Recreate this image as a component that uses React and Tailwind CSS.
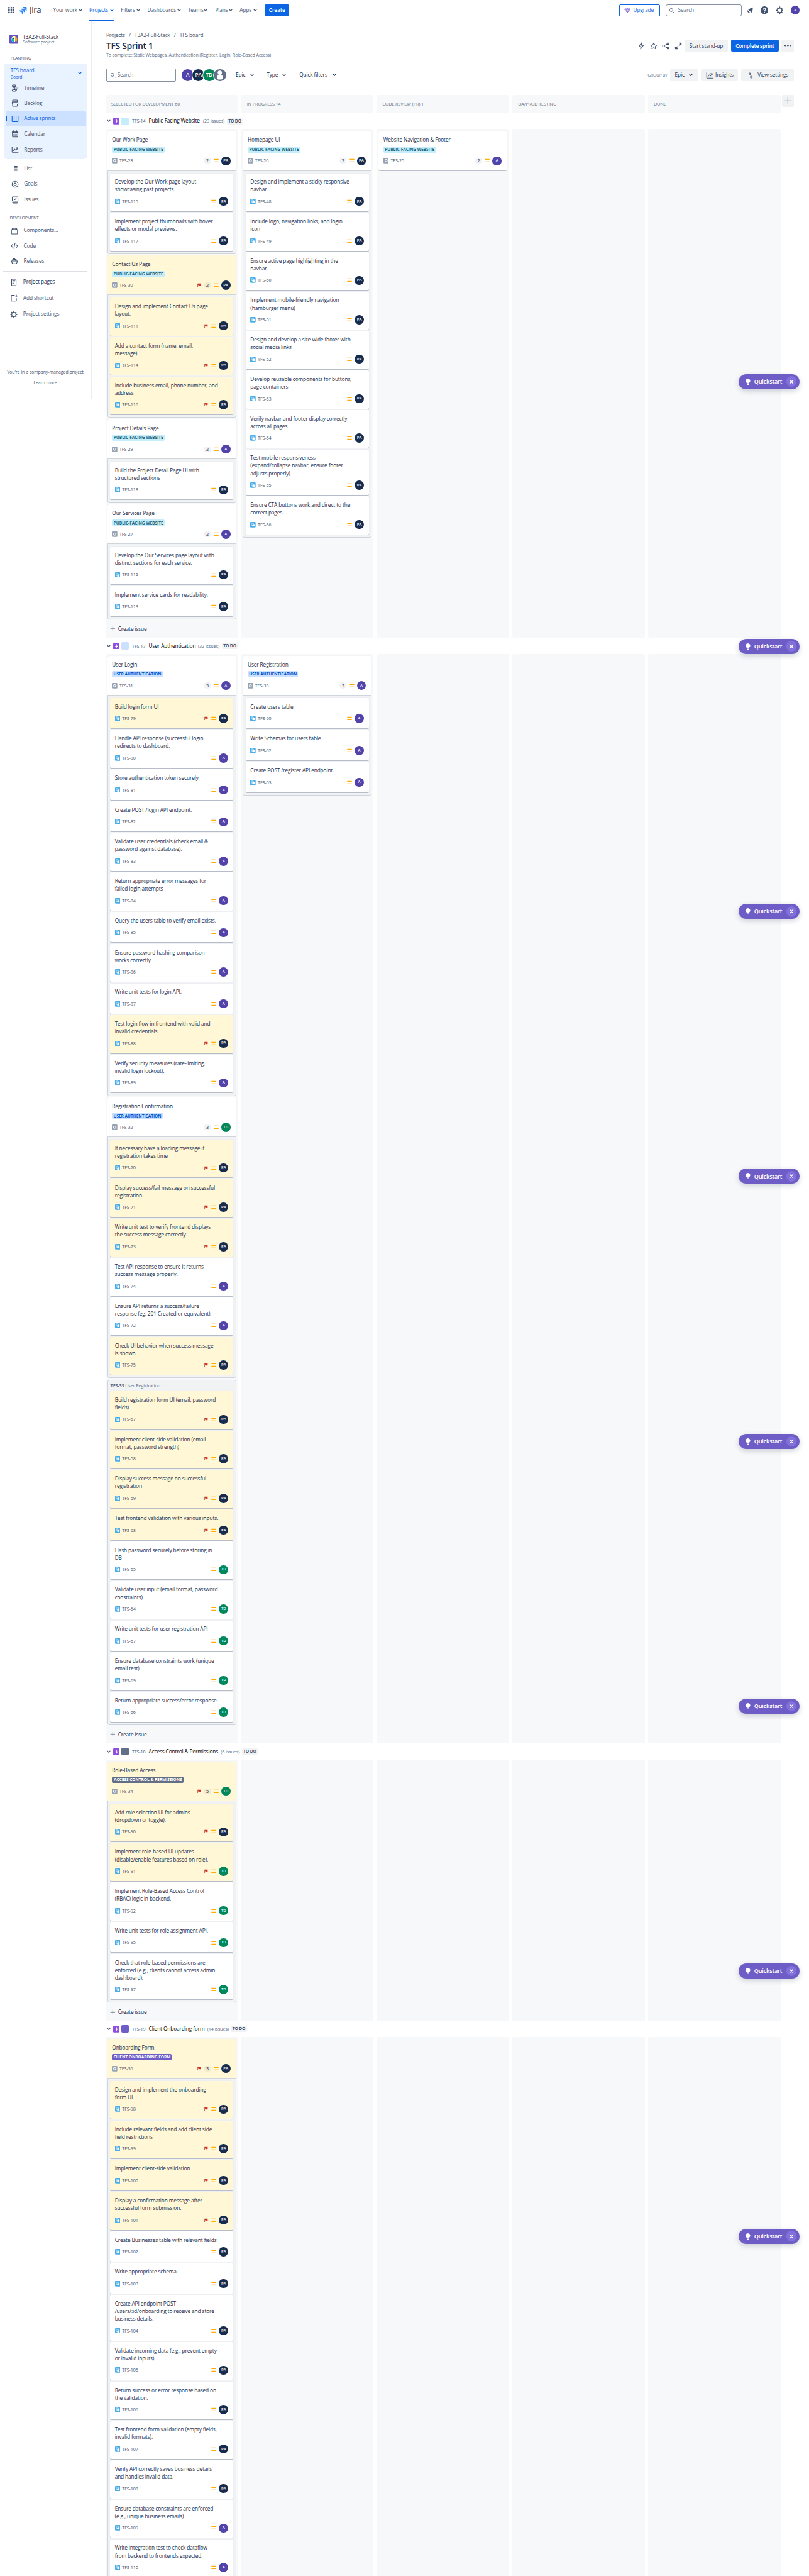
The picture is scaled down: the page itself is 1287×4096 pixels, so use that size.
import React from "react";

/* One spacing unit is one design pixel of the 1920px wide layout. */

const AVATAR = {
  A: "bg-[#5243aa]",
  PA: "bg-[#172b4d]",
  TD: "bg-[#00875a]",
};

const TAGS = {
  public: { label: "PUBLIC-FACING WEBSITE", tone: "bg-[#c6edfb] text-[#206a83]", width: "w-125" },
  auth: { label: "USER AUTHENTICATION", tone: "bg-[#cce0ff] text-[#0055cc]", width: "w-120" },
  access: { label: "ACCESS CONTROL & PERMISSIONS", tone: "bg-[#626f86] text-white", width: "w-170" },
  onboarding: { label: "CLIENT ONBOARDING FORM", tone: "bg-[#6e5dc6] text-white", width: "w-142" },
};

const sub = (id, who, flag, ...lines) => ({ id, who, flag, lines });

const LANES = [
  {
    id: "TFS-14", title: "Public-Facing Website", titleWidth: "w-122", countWidth: "w-49.5", count: 23, tag: "public", color: "bg-[#c6edfb]",
    columns: [
      [
        { title: "Our Work Page", id: "TFS-28", points: 2, who: "PA", subs: [
          sub("TFS-115", "PA", 0, "Develop the Our Work page layout", "showcasing past projects."),
          sub("TFS-117", "PA", 0, "Implement project thumbnails with hover", "effects or modal previews."),
        ] },
        { title: "Contact Us Page", id: "TFS-30", points: 2, who: "PA", flag: 1, subs: [
          sub("TFS-111", "PA", 1, "Design and implement Contact Us page", "layout."),
          sub("TFS-114", "PA", 1, "Add a contact form (name, email,", "message)."),
          sub("TFS-116", "PA", 1, "Include business email, phone number, and", "address"),
        ] },
        { title: "Project Details Page", id: "TFS-29", points: 2, who: "A", subs: [
          sub("TFS-118", "PA", 0, "Build the Project Detail Page UI with", "structured sections"),
        ] },
        { title: "Our Services Page", id: "TFS-27", points: 2, who: "A", subs: [
          sub("TFS-112", "PA", 0, "Develop the Our Services page layout with", "distinct sections for each service."),
          sub("TFS-113", "PA", 0, "Implement service cards for readability."),
        ] },
      ],
      [
        { title: "Homepage UI", id: "TFS-26", points: 2, who: "PA", subs: [
          sub("TFS-48", "PA", 0, "Design and implement a sticky responsive", "navbar."),
          sub("TFS-49", "PA", 0, "Include logo, navigation links, and login", "icon"),
          sub("TFS-50", "PA", 0, "Ensure active page highlighting in the", "navbar."),
          sub("TFS-51", "PA", 0, "Implement mobile-friendly navigation", "(hamburger menu)"),
          sub("TFS-52", "PA", 0, "Design and develop a site-wide footer with", "social media links"),
          sub("TFS-53", "PA", 0, "Develop reusable components for buttons,", "page containers"),
          sub("TFS-54", "PA", 0, "Verify navbar and footer display correctly", "across all pages."),
          sub("TFS-55", "PA", 0, "Test mobile responsiveness", "(expand/collapse navbar, ensure footer", "adjusts properly)."),
          sub("TFS-56", "PA", 0, "Ensure CTA buttons work and direct to the", "correct pages."),
        ] },
      ],
      [{ title: "Website Navigation & Footer", id: "TFS-25", points: 2, who: "A", subs: [] }],
    ],
  },
  {
    id: "TFS-17", title: "User Authentication", titleWidth: "w-110", countWidth: "w-49.5", count: 32, tag: "auth", color: "bg-[#cce0ff]",
    columns: [
      [
        { title: "User Login", id: "TFS-31", points: 3, who: "A", subs: [
          sub("TFS-79", "PA", 1, "Build login form UI"),
          sub("TFS-80", "A", 0, "Handle API response (successful login", "redirects to dashboard,"),
          sub("TFS-81", "A", 0, "Store authentication token securely"),
          sub("TFS-82", "A", 0, "Create POST /login API endpoint."),
          sub("TFS-83", "A", 0, "Validate user credentials (check email &", "password against database)."),
          sub("TFS-84", "A", 0, "Return appropriate error messages for", "failed login attempts"),
          sub("TFS-85", "A", 0, "Query the users table to verify email exists."),
          sub("TFS-86", "A", 0, "Ensure password hashing comparison", "works correctly"),
          sub("TFS-87", "A", 0, "Write unit tests for login API."),
          sub("TFS-88", "PA", 1, "Test login flow in frontend with valid and", "invalid credentials."),
          sub("TFS-89", "A", 0, "Verify security measures (rate-limiting,", "invalid login lockout)."),
        ] },
        { title: "Registration Confirmation", id: "TFS-32", points: 3, who: "TD", subs: [
          sub("TFS-70", "PA", 1, "If necessary have a loading message if", "registration takes time"),
          sub("TFS-71", "PA", 1, "Display success/fail message on successful", "registration."),
          sub("TFS-73", "PA", 1, "Write unit test to verify frontend displays", "the success message correctly."),
          sub("TFS-74", "A", 0, "Test API response to ensure it returns", "success message properly."),
          sub("TFS-72", "A", 0, "Ensure API returns a success/failure", "response (eg: 201 Created or equivalent)."),
          sub("TFS-75", "PA", 1, "Check UI behavior when success message", "is shown"),
        ] },
        { orphan: "User Registration", id: "TFS-33", subs: [
          sub("TFS-57", "PA", 1, "Build registration form UI (email, password", "fields)"),
          sub("TFS-58", "PA", 1, "Implement client-side validation (email", "format, password strength)"),
          sub("TFS-59", "PA", 1, "Display success message on successful", "registration"),
          sub("TFS-68", "PA", 1, "Test frontend validation with various inputs."),
          sub("TFS-65", "TD", 0, "Hash password securely before storing in", "DB"),
          sub("TFS-64", "TD", 0, "Validate user input (email format, password", "constraints)"),
          sub("TFS-67", "TD", 0, "Write unit tests for user registration API"),
          sub("TFS-69", "TD", 0, "Ensure database constraints work (unique", "email test)."),
          sub("TFS-66", "TD", 0, "Return appropriate success/error response"),
        ] },
      ],
      [
        { title: "User Registration", id: "TFS-33", points: 3, who: "A", subs: [
          sub("TFS-60", "A", 0, "Create users table"),
          sub("TFS-62", "A", 0, "Write Schemas for users table"),
          sub("TFS-63", "A", 0, "Create POST /register API endpoint."),
        ] },
      ],
      [],
    ],
  },
  {
    id: "TFS-18", title: "Access Control & Permissions", titleWidth: "w-164", countWidth: "w-43", count: 6, tag: "access", color: "bg-[#626f86]",
    columns: [
      [
        { title: "Role-Based Access", id: "TFS-34", points: 5, who: "TD", flag: 1, subs: [
          sub("TFS-90", "PA", 1, "Add role selection UI for admins", "(dropdown or toggle)."),
          sub("TFS-91", "TD", 1, "Implement role-based UI updates", "(disable/enable features based on role)."),
          sub("TFS-92", "TD", 0, "Implement Role-Based Access Control", "(RBAC) logic in backend."),
          sub("TFS-95", "TD", 0, "Write unit tests for role assignment API."),
          sub("TFS-97", "TD", 0, "Check that role-based permissions are", "enforced (e.g., clients cannot access admin", "dashboard)."),
        ] },
      ],
      [],
      [],
    ],
  },
  {
    id: "TFS-19", title: "Client Onboarding form", titleWidth: "w-132", countWidth: "w-49", count: 14, tag: "onboarding", color: "bg-[#6e5dc6]", last: true,
    columns: [
      [
        { title: "Onboarding Form", id: "TFS-36", points: 3, who: "PA", flag: 1, subs: [
          sub("TFS-98", "PA", 1, "Design and implement the onboarding", "form UI."),
          sub("TFS-99", "PA", 1, "Include relevant fields and add client side", "field restrictions"),
          sub("TFS-100", "PA", 1, "Implement client-side validation"),
          sub("TFS-101", "PA", 1, "Display a confirmation message after", "successful form submission."),
          sub("TFS-102", "PA", 0, "Create Businesses table with relevant fields"),
          sub("TFS-103", "PA", 0, "Write appropriate schema"),
          sub("TFS-104", "PA", 0, "Create API endpoint POST", "/users/:id/onboarding to receive and store", "business details."),
          sub("TFS-105", "PA", 0, "Validate incoming data (e.g., prevent empty", "or invalid inputs)."),
          sub("TFS-106", "PA", 0, "Return success or error response based on", "the validation."),
          sub("TFS-107", "PA", 0, "Test frontend form validation (empty fields,", "invalid formats)."),
          sub("TFS-108", "PA", 0, "Verify API correctly saves business details", "and handles invalid data."),
          sub("TFS-109", "A", 0, "Ensure database constraints are enforced", "(e.g., unique business emails)."),
          sub("TFS-110", "A", 0, "Write integration test to check dataflow", "from backend to frontends expected."),
        ] },
      ],
      [],
      [],
    ],
  },
];

/* ---------- icons ---------- */

function Svg({ className = "size-18", children, ...rest }) {
  return (
    <svg viewBox="0 0 24 24" fill="none" stroke="currentColor" strokeWidth="2.2" strokeLinecap="round" strokeLinejoin="round" className={"shrink-0 " + className} {...rest}>
      {children}
    </svg>
  );
}

const Chevron = ({ className = "" }) => (
  <svg viewBox="0 0 10 8" fill="none" stroke="currentColor" strokeWidth="2.1" strokeLinecap="round" strokeLinejoin="round" className={"w-9 h-7 shrink-0 " + className}>
    <path d="M1.6 2 5 5.8 8.4 2" />
  </svg>
);

const Magnifier = ({ className = "size-14" }) => (
  <Svg className={className} strokeWidth="2.4"><circle cx="10" cy="10" r="6.5" /><path d="m15 15 5.5 5.5" /></Svg>
);

const Timeline = () => (
  <Svg><rect x="3" y="2" width="11" height="5" rx="2" /><rect x="10" y="9.5" width="11" height="5" rx="2" /><rect x="3" y="17" width="11" height="5" rx="2" /><path d="M7 7v2.5q0 2.5 3 2.5M17 14.5v2q0 3-3 3" /></Svg>
);
const Backlog = () => (
  <Svg><rect x="4" y="2" width="15" height="6" rx="1.5" /><rect x="3" y="8" width="18" height="7" rx="1.5" /><rect x="4" y="15" width="15" height="7" rx="1.5" /></Svg>
);
const Board = () => (
  <Svg><rect x="2.5" y="3" width="19" height="18" rx="1.5" /><path d="M9 3v18M15 3v18" /></Svg>
);
const Calendar = () => (
  <Svg><rect x="3.5" y="4" width="17" height="17.5" rx="2" /><path d="M3.5 6.5h17M7.5 2v3M16.5 2v3" strokeWidth="3.4" /><path d="M8 12.5h.01M12 12.5h.01M16 12.5h.01M8 17h.01M12 17h.01M16 17h.01" strokeWidth="2.4" /></Svg>
);
const Chart = ({ className }) => (
  <Svg className={className}><path d="M2.5 3v15.5q0 2 2 2H21.5" /><path d="m6.5 15 4-5 3.5 3.5 6-7M15 6h5v5" /></Svg>
);
const List = () => (
  <Svg className="size-14"><path d="M10 4h11M10 9.5h11M10 15h11M10 20.5h11M4 4h.01M4 9.5h.01M4 15h.01M4 20.5h.01" strokeWidth="2.8" /></Svg>
);
const Goals = () => (
  <Svg><circle cx="12" cy="12" r="9.5" /><circle cx="12" cy="12" r="3.8" /></Svg>
);
const Issues = () => (
  <Svg><rect x="3" y="2" width="18" height="13.5" rx="1.5" /><path d="m8.5 8.5 2.5 2.5 4.5-5M4 18.5h16M6 22h12" /></Svg>
);
const Components = () => (
  <Svg><rect x="2.5" y="8" width="19" height="14" rx="1.5" /><path d="M5 8V4h5v4M14 8V4h5v4" /></Svg>
);
const Code = () => (
  <Svg><path d="M7 6l-5 5.5 5 5.5M17 7l5 5.5-5 5.5M14 2.5 10 20" /></Svg>
);
const Releases = () => (
  <Svg><path d="M2.5 12h19l-3 8.5H5.5zM6 12V7h10v5M9 7V3h4v4M18 8v4" /></Svg>
);
const Page = () => (
  <Svg><rect x="5" y="2" width="14" height="20" rx="1.5" /><path d="M8.5 6.5h7M8.5 10.5h7M8.5 14.5h3" /></Svg>
);
const AddShortcut = () => (
  <Svg><path d="M14 3H5.5Q4 3 4 4.5v15.5Q4 21.5 5.5 21.5H18.5q1.5 0 1.5-1.5V13M20 2v7M16.8 5.5h6.4" /></Svg>
);
const Cog = ({ className }) => (
  <Svg className={className} strokeWidth="2.6">
    <circle cx="12" cy="12" r="6.8" />
    <path d="M12 2.5v2M12 19.5v2M2.5 12h2M19.5 12h2M5.3 5.3l1.4 1.4M17.3 17.3l1.4 1.4M5.3 18.7l1.4-1.4M17.3 6.7l1.4-1.4" strokeWidth="3.6" />
  </Svg>
);
const Plus = ({ className = "size-16" }) => (
  <Svg className={className} strokeWidth="1.8"><path d="M12 3v18M3 12h18" /></Svg>
);

const SubtaskIcon = () => (
  <svg viewBox="0 0 16 16" className="size-13 shrink-0">
    <rect width="16" height="16" rx="2" fill="#4bade8" />
    <rect x="3.5" y="3.5" width="6" height="6" rx="1" fill="none" stroke="#fff" strokeWidth="1.3" />
    <rect x="6.5" y="6.5" width="6.5" height="6.5" rx="1" fill="#fff" />
  </svg>
);
const TaskIcon = () => (
  <svg viewBox="0 0 16 16" className="size-13 shrink-0">
    <rect width="16" height="16" rx="2" fill="#97a3b4" />
    <circle cx="8" cy="8" r="3.3" fill="none" stroke="#fff" strokeWidth="2" />
  </svg>
);
const Medium = () => (
  <svg viewBox="0 0 12 10" className="w-12 h-10 shrink-0">
    <path d="M.5 2h11M.5 8h11" stroke="#ffab00" strokeWidth="1.9" />
  </svg>
);
const Flag = () => (
  <svg viewBox="0 0 10 11" className="w-8 h-10 shrink-0 mr-8">
    <path d="M.5.5H10V7H5.5L4.5 6H2v4.5H.5z" fill="#c9372c" />
  </svg>
);

function Avatar({ who }) {
  return (
    <span className={"flex w-22 h-21.5 shrink-0 items-center justify-center rounded-full text-[6px] font-semibold tracking-normal text-white " + AVATAR[who]}>{who}</span>
  );
}

/* ---------- top bar ---------- */

const NAV = [
  ["Your work", "w-86", "w-61"],
  ["Projects", "w-75", "w-49"],
  ["Filters", "w-63", "w-37.5"],
  ["Dashboards", "w-96", "w-70.5"],
  ["Teams", "w-65", "w-38"],
  ["Plans", "w-58", "w-32.5"],
  ["Apps", "w-59", "w-32"],
];

function TopBar() {
  return (
    <header className="flex h-50 shrink-0 items-center border-b border-[#dcdfe4] text-[#44546f]">
      <svg viewBox="0 0 15 15" className="ml-19.5 size-15 shrink-0" fill="currentColor">
        {[0, 5.6, 11.2].map((y) => [0, 5.6, 11.2].map((x) => <rect key={x + "-" + y} x={x} y={y} width="3.8" height="3.8" rx="1" />))}
      </svg>
      <svg viewBox="0 0 24 24" className="ml-12.5 size-17 shrink-0" fill="#2684ff">
        <path d="M11.571 11.513H0a5.218 5.218 0 0 0 5.232 5.215h2.130v2.057A5.215 5.215 0 0 0 12.575 24V12.518a1.005 1.005 0 0 0-1.005-1.005z" />
        <path d="M17.294 5.757H5.736a5.215 5.215 0 0 0 5.215 5.214h2.129v2.058a5.218 5.218 0 0 0 5.215 5.214V6.758a1.001 1.001 0 0 0-1.001-1.001z" />
        <path d="M23.013 0H11.455a5.215 5.215 0 0 0 5.215 5.215h2.129v2.057A5.215 5.215 0 0 0 24 12.483V1.005A1.001 1.001 0 0 0 23.013 0Z" />
      </svg>
      <span className="ml-6 w-56 text-[13.2px] tracking-[-0.3px] font-medium text-[#253858]">Jira</span>
      <nav className="flex h-full">
        {NAV.map(([label, width, textWidth], i) => (
          <div key={label} className={"relative flex shrink-0 items-center font-medium " + width + (i === 1 ? " text-[#0c66e4]" : "")}>
            <span className={"shrink-0 whitespace-nowrap " + textWidth}>{label}</span>
            <Chevron />
            {i === 1 && <span className="absolute bottom-[-1px] -left-2 h-3 w-60 bg-[#0c66e4]" />}
          </div>
        ))}
      </nav>
      <button className="flex h-29 w-59 items-center justify-center rounded-[2px] bg-[#0c66e4] font-semibold text-white">Create</button>
      <button className="ml-auto flex h-29 w-96 items-center rounded-[2px] border border-[#0c66e4] pl-10 font-medium text-[#0c66e4]">
        <svg viewBox="0 0 16 14" className="mr-6.5 w-15 h-13" fill="none" stroke="#8270db" strokeWidth="1.4" strokeLinejoin="round">
          <path d="M4 1h8l3 4-7 8-7-8zM1 5h14M5.5 5 8 13l2.5-8L8 1z" fill="#dfd8fd" />
        </svg>
        Upgrade
      </button>
      <div className="ml-14 flex h-29 w-180 items-center gap-7 rounded-[3px] border border-[#8590a2] pl-6.5 text-[#626f86]">
        <Magnifier />Search
      </div>
      <svg viewBox="0 0 24 24" className="ml-10 size-18" fill="currentColor">
        <path d="M20.5 3.5c1 5.5.5 9.5-2.5 13.5l.3 3.5-12-9.5 3-1.5C12.5 6.5 16 4 20.5 3.5zM4.5 12.5l7 6.5c-2 2.5-4.5 2-5.5 0-2-1.5-3-4-1.5-6.5z" />
      </svg>
      <svg viewBox="0 0 24 24" className="ml-17 size-18.5">
        <circle cx="12" cy="12" r="12" fill="#44546f" />
        <path d="M8.5 9.5a3.5 3.5 0 1 1 5.5 2.8q-2 1.2-2 2.7" stroke="#fff" strokeWidth="2.3" fill="none" strokeLinecap="round" />
        <circle cx="12" cy="18.5" r="1.5" fill="#fff" />
      </svg>
      <Cog className="ml-17 size-19" />
      <span className="mr-22 ml-17.5 flex size-21 items-center justify-center rounded-full bg-[#5243aa] text-[6px] font-semibold text-white">A</span>
    </header>
  );
}

/* ---------- sidebar ---------- */

function SideItem({ icon, label, height = "h-36", pad = "pl-17", dark = false }) {
  return (
    <div className={"flex shrink-0 items-center gap-12.5 " + height + " " + pad + (dark ? " text-[#172b4d]" : "")}>
      <span className="flex w-18.5 justify-center text-[#44546f]">{icon}</span>
      {label}
    </div>
  );
}

function Sidebar() {
  return (
    <aside className="flex h-895 w-218 shrink-0 flex-col border-r-2 border-[#ebecf0] text-[#44546f]">
      <div className="mt-31 ml-22 flex h-24 items-center">
        <svg viewBox="0 0 24 24" className="size-21.5">
          <rect width="24" height="24" rx="2.5" fill="#6554c0" />
          <path d="M13 4c4.5 0 7.5 4 7.5 8.5 0 3-1 5-2.5 6.5-2-1-5-4-5-8z" fill="#ffab00" />
          <path d="M12.5 4C8 4 5.5 7.5 5.5 12s2.5 8 7 8c1.5 0 2.5-.5 2.5-2V4.5C14.5 4 13.5 4 12.5 4z" fill="#fff" />
          <path d="M5.5 12c0 4.5 2.5 8 7 8V14L8.5 9z" fill="#00b8d9" />
          <circle cx="11.5" cy="10" r="2" fill="#253858" />
        </svg>
        <div className="ml-10.5">
          <div className="leading-14 font-medium text-[#172b4d]">T3A2-Full-Stack</div>
          <div className="text-[6.8px] leading-11 text-[#626f86]">Software project</div>
        </div>
      </div>
      <div className="mt-26 ml-25 h-15 text-[6.7px] leading-15 font-medium">PLANNING</div>
      <div className="mt-5 ml-9 h-227 w-199 rounded-[5px] bg-[#e9f2ff]">
        <div className="flex h-40.5 items-center justify-between pt-6 pr-14 pl-16 text-[#0c66e4]">
          <div>
            <div className="leading-16">TFS board</div>
            <div className="text-[6.8px] leading-13.5">Board</div>
          </div>
          <Chevron />
        </div>
        <SideItem icon={<Timeline />} label="Timeline" />
        <SideItem icon={<Backlog />} label="Backlog" />
        <div className="mx-4 flex h-36 items-center rounded-[2px] bg-[#cce0ff] text-[#0c66e4]">
          <span className="h-14 w-3 bg-[#0c66e4]" />
          <span className="ml-10 flex w-18.5 justify-center"><Board /></span>
          <span className="ml-12.5">Active sprints</span>
        </div>
        <SideItem icon={<Calendar />} label="Calendar" />
        <SideItem icon={<Chart />} label="Reports" height="h-39" />
      </div>
      <div className="mt-4 flex flex-col">
        <SideItem icon={<List />} label="List" pad="pl-26" />
        <SideItem icon={<Goals />} label="Goals" height="h-37" pad="pl-26" />
        <SideItem icon={<Issues />} label="Issues" height="h-38" pad="pl-26" />
      </div>
      <div className="mt-17 ml-23 h-15 text-[6.7px] leading-15 font-medium">DEVELOPMENT</div>
      <div className="mt-4 flex flex-col">
        <SideItem icon={<Components />} label="Components..." pad="pl-25" />
        <SideItem icon={<Code />} label="Code" pad="pl-25" />
        <SideItem icon={<Releases />} label="Releases" height="h-37" pad="pl-25" />
      </div>
      <div className="mt-5 mr-7 ml-7 h-[1px] shrink-0 bg-[#dcdfe4]" />
      <div className="mt-7 flex flex-col">
        <SideItem icon={<Page />} label="Project pages" pad="pl-24" dark />
        <SideItem icon={<AddShortcut />} label="Add shortcut" height="h-39" pad="pl-24" />
        <SideItem icon={<Cog />} label="Project settings" height="h-38" pad="pl-24" />
      </div>
      <div className="mt-112 text-center text-[6.9px] leading-16 tracking-normal">You're in a company-managed project</div>
      <div className="mt-8 text-center text-[6.9px] leading-16 font-medium tracking-normal">Learn more</div>
    </aside>
  );
}

/* ---------- board ---------- */

function SubCard({ item }) {
  return (
    <article className={"mb-[2.44px] rounded-[2px] pt-11.5 pb-12.5 pr-12 pl-11.5 shadow-[0_1px_0_rgba(9,30,66,0.24),0_0_1px_rgba(9,30,66,0.15)] " + (item.flag ? "bg-[#fff7d6]" : "bg-white")}>
      {item.lines.map((line) => (
        <p key={line} className="leading-18 whitespace-nowrap text-[#172b4d]">{line}</p>
      ))}
      <div className="mt-8.5 flex h-21.5 items-center">
        <SubtaskIcon />
        <span className="ml-4.5 text-[7.2px] font-medium text-[#44546f]">{item.id}</span>
        <span className="ml-auto flex items-center">
          {item.flag ? <Flag /> : null}
          <Medium />
          <span className="ml-6.5"><Avatar who={item.who} /></span>
        </span>
      </div>
    </article>
  );
}

function ParentCard({ item, tag }) {
  const t = TAGS[tag];
  const alone = item.subs.length === 0;
  return (
    <article className={"h-92.75 pt-12 pr-13.5 pl-11.5 " + (alone ? "rounded-[3px] shadow-[0_1px_0_rgba(9,30,66,0.24),0_0_1px_rgba(9,30,66,0.15)] " : "rounded-t-[3px] shadow-[0_0_1px_rgba(9,30,66,0.15)] ") + (item.flag ? "bg-[#fff7d6]" : "bg-white")}>
      <p className="leading-18 whitespace-nowrap text-[#172b4d]">{item.title}</p>
      <div className={"mt-6.5 flex h-15 items-center justify-center rounded-[2px] text-[6.55px] font-bold tracking-[-0.03px] whitespace-nowrap " + t.tone + " " + t.width}>{t.label}</div>
      <div className="mt-8.5 flex h-21.5 items-center">
        <TaskIcon />
        <span className="ml-4.5 text-[7.2px] font-medium text-[#44546f]">{item.id}</span>
        <span className="ml-auto flex items-center">
          {item.flag ? <Flag /> : null}
          <span className="mr-6 flex h-14 w-17 items-center justify-center rounded-full bg-[#091e420f] text-[7.2px] text-[#172b4d]">{item.points}</span>
          <Medium />
          <span className="ml-6"><Avatar who={item.who} /></span>
        </span>
      </div>
    </article>
  );
}

function Group({ item, tag }) {
  if (item.orphan) {
    return (
      <section className="mb-[2.44px] rounded-[3px] border border-[#d0d4db] bg-[#f1f2f4] px-5 pb-[1.8px]">
        <h4 className="h-[17.4px] pl-1 text-[7.2px] leading-[17.4px] text-[#626f86]"><b className="font-bold">{item.id}</b> {item.orphan}</h4>
        {item.subs.map((s) => <SubCard key={s.id} item={s} />)}
      </section>
    );
  }
  return (
    <section className="mb-[2.44px]">
      <ParentCard item={item} tag={tag} />
      {item.subs.length > 0 && (
        <div className="rounded-b-[3px] border border-[#d0d4db] bg-[#f1f2f4] px-5 pt-[4px] pb-[1.8px]">
          {item.subs.map((s) => <SubCard key={s.id} item={s} />)}
        </div>
      )}
    </section>
  );
}

function Lane({ lane }) {
  return (
    <section>
      <div className="flex h-[25.4px] items-center pl-3.5 whitespace-nowrap text-[#44546f]">
        <Chevron />
        <svg viewBox="0 0 16 16" className="ml-5.5 size-16 shrink-0">
          <rect width="16" height="16" rx="2" fill="#904ee2" />
          <path d="M9 2.5 4.5 9H7.5L7 13.5 11.5 7H8.5z" fill="#fff" />
        </svg>
        <span className={"ml-4 size-18 shrink-0 rounded-[2px] " + lane.color} />
        <span className="ml-7.5 w-32 shrink-0 text-[7.2px]">{lane.id}</span>
        <span className={"ml-7.5 shrink-0 text-black " + lane.titleWidth}>{lane.title}</span>
        <span className={"ml-7 shrink-0 text-[7.3px] text-[#626f86] " + lane.countWidth}>({lane.count} issues)</span>
        <span className="ml-7 flex h-14.5 w-38 shrink-0 items-center justify-center rounded-[2px] bg-[#f1f2f4] text-[6.7px] font-bold">TO DO</span>
      </div>
      <div className="grid w-1602 grid-cols-5 gap-7">
        {[0, 1, 2, 3, 4].map((c) => (
          <div key={c} className="rounded-[3px] bg-[#f7f8f9] px-4.5 pt-4.5">
            {(lane.columns[c] || []).map((item) => <Group key={item.id + (item.title || "")} item={item} tag={lane.tag} />)}
            {c === 0 && !lane.last && (
              <button className="flex h-[26.6px] items-center gap-5.5 pb-4 pl-7 font-medium text-[#172b4d]">
                <Plus className="size-13 text-[#44546f]" />Create issue
              </button>
            )}
          </div>
        ))}
      </div>
    </section>
  );
}

function PageHeader() {
  return (
    <div className="flex h-107 justify-between pr-36">
      <div className="pl-2">
        <div className="mt-25 flex h-18 items-center gap-9 text-[#44546f]">
          <span>Projects</span><span>/</span><span>T3A2-Full-Stack</span><span>/</span><span>TFS board</span>
        </div>
        <h1 className="mt-3 text-[14px] leading-26 font-semibold tracking-[-0.37px] text-[#172b4d]">TFS Sprint 1</h1>
        <p className="text-[7.1px] leading-16 tracking-[-0.1px] text-[#626f86]">To complete: Static Webpages, Authentication (Register, Login, Role-Based Access)</p>
      </div>
      <div className="mt-44 flex h-29 items-center font-medium text-[#172b4d]">
        <Svg className="mr-11 size-18 text-[#44546f]"><path d="M13 2 5 14h6l-1 8 9-12h-6z" /></Svg>
        <Svg className="mr-11 size-18 text-[#44546f]"><path d="m12 2.5 2.9 6.1 6.6.8-4.9 4.6 1.3 6.7L12 17.4l-5.9 3.3 1.3-6.7L2.5 9.4l6.6-.8z" /></Svg>
        <Svg className="mr-11 size-18 text-[#44546f]"><circle cx="5" cy="12" r="3" /><circle cx="19" cy="5" r="2.7" /><circle cx="19" cy="19" r="2.7" /><path d="m8 10.5 8.5-4.5M8 13.5l8.5 4.5" /></Svg>
        <Svg className="mr-6 size-18 text-[#44546f]" strokeWidth="2.6"><path d="M14.5 9.5 21 3M15 3h6v6M9.5 14.5 3 21M3 15v6h6" /></Svg>
        <button className="h-29 w-104 rounded-[2px] bg-[#f1f2f4]">Start stand-up</button>
        <button className="ml-7 h-29 w-113 rounded-[2px] bg-[#0c66e4] font-semibold tracking-[-0.2px] text-white">Complete sprint</button>
        <button className="ml-7 flex h-29 w-29 items-center justify-center rounded-[2px] bg-[#f1f2f4]">
          <svg viewBox="0 0 16 4" className="w-16 h-4" fill="#44546f"><circle cx="2" cy="2" r="1.9" /><circle cx="8" cy="2" r="1.9" /><circle cx="14" cy="2" r="1.9" /></svg>
        </button>
      </div>
    </div>
  );
}

function Toolbar() {
  const round = "flex size-29 items-center justify-center rounded-full text-[8.2px] font-semibold text-white ring-1 ring-white ";
  return (
    <div className="flex h-43 items-center pr-36 pl-2 font-medium text-[#172b4d]">
      <div className="flex h-31 w-166 items-center gap-4 rounded-[2px] border border-[#8590a2] pl-7 font-normal text-[#626f86]">
        <Magnifier />Search
      </div>
      <div className="ml-13 flex -space-x-3.5">
        <span className={round + "bg-[#5243aa]"}>A</span>
        <span className={round + "bg-[#172b4d]"}>PA</span>
        <span className={round + "bg-[#00875a]"}>TD</span>
        <span className={round + "bg-[#626f86]"}>
          <svg viewBox="0 0 29 29" className="size-29" fill="#fff"><circle cx="14.5" cy="8.5" r="5" /><rect x="7.5" y="14.5" width="14" height="10" rx="3.5" /></svg>
        </span>
      </div>
      <span className="ml-23 w-34">Epic</span><Chevron />
      <span className="ml-30.5 w-37.5">Type</span><Chevron />
      <span className="ml-31 w-78.5 whitespace-nowrap">Quick filters</span><Chevron />
      <span className="mr-7 ml-auto text-[6.6px] font-normal text-[#626f86]">GROUP BY</span>
      <button className="flex h-29 w-66 items-center justify-between rounded-[2px] bg-[#f1f2f4] pr-13 pl-10.5">Epic<Chevron /></button>
      <button className="ml-7 flex h-29 w-88 items-center justify-center gap-4.5 rounded-[2px] bg-[#f1f2f4]"><Chart className="size-18 text-[#44546f]" />Insights</button>
      <button className="ml-7 flex h-29 w-125 items-center justify-center gap-8 rounded-[2px] bg-[#f1f2f4]">
        <Svg className="size-18 text-[#44546f]"><path d="M2 7h4M13 7h8M2 17h9M18 17h3" /><circle cx="9.5" cy="7" r="3" /><circle cx="14.5" cy="17" r="3" /></Svg>View settings
      </button>
    </div>
  );
}

const COLUMNS = ["SELECTED FOR DEVELOPMENT 60", "IN PROGRESS 14", "CODE REVIEW (PR) 1", "UA/PROD TESTING", "DONE"];
const QUICKSTARTS = ["top-887", "top-1515", "top-2144", "top-2772", "top-3401", "top-4029", "top-4657", "top-5286"];

function Quickstart({ top }) {
  return (
    <div className={"absolute left-1753 flex h-36 w-145 items-center rounded-full bg-[#6e5dc6] pl-16 font-semibold text-white shadow-[0_3px_8px_rgba(9,30,66,0.2)] " + top}>
      <svg viewBox="0 0 12 16" className="w-11.5 h-15" fill="#fff">
        <path d="M6 0a5.8 5.8 0 0 0-3.3 10.6L3.2 12.5h5.6l.5-1.9A5.8 5.8 0 0 0 6 0zM3.2 13.6h5.6V15a1 1 0 0 1-1 1H4.2a1 1 0 0 1-1-1z" />
      </svg>
      <span className="ml-9 w-67 text-[9.2px] tracking-[-0.19px]">Quickstart</span>
      <span className="ml-9 flex size-25 items-center justify-center rounded-full bg-[#8270db]">
        <Svg className="size-12" strokeWidth="4.5"><path d="m5 5 14 14M19 5 5 19" /></Svg>
      </span>
    </div>
  );
}

export default function App() {
  return (
    <div className="relative h-[4096px] w-[1287px] overflow-hidden bg-white [--spacing:0.6704px] font-['Open_Sans','Noto_Sans',sans-serif] text-[8.3px] tracking-[-0.12px]">
      <TopBar />
      <div className="flex items-start">
        <Sidebar />
        <main className="ml-32 flex-1">
          <PageHeader />
          <Toolbar />
          <div className="mt-25.25 flex">
            <div className="grid h-43.25 w-1602 grid-cols-5 gap-7">
              {COLUMNS.map((name) => (
                <div key={name} className="flex items-center rounded-t-[3px] bg-[#f7f8f9] pl-14 text-[7.1px] tracking-[-0.045px] text-[#626f86]">{name}</div>
              ))}
            </div>
            <button className="ml-3 flex size-29 items-center justify-center rounded-[2px] bg-[#f1f2f4] text-[#44546f]"><Plus className="size-19" /></button>
          </div>
          {LANES.map((lane) => <Lane key={lane.id} lane={lane} />)}
        </main>
      </div>
      {QUICKSTARTS.map((top) => <Quickstart key={top} top={top} />)}
    </div>
  );
}
